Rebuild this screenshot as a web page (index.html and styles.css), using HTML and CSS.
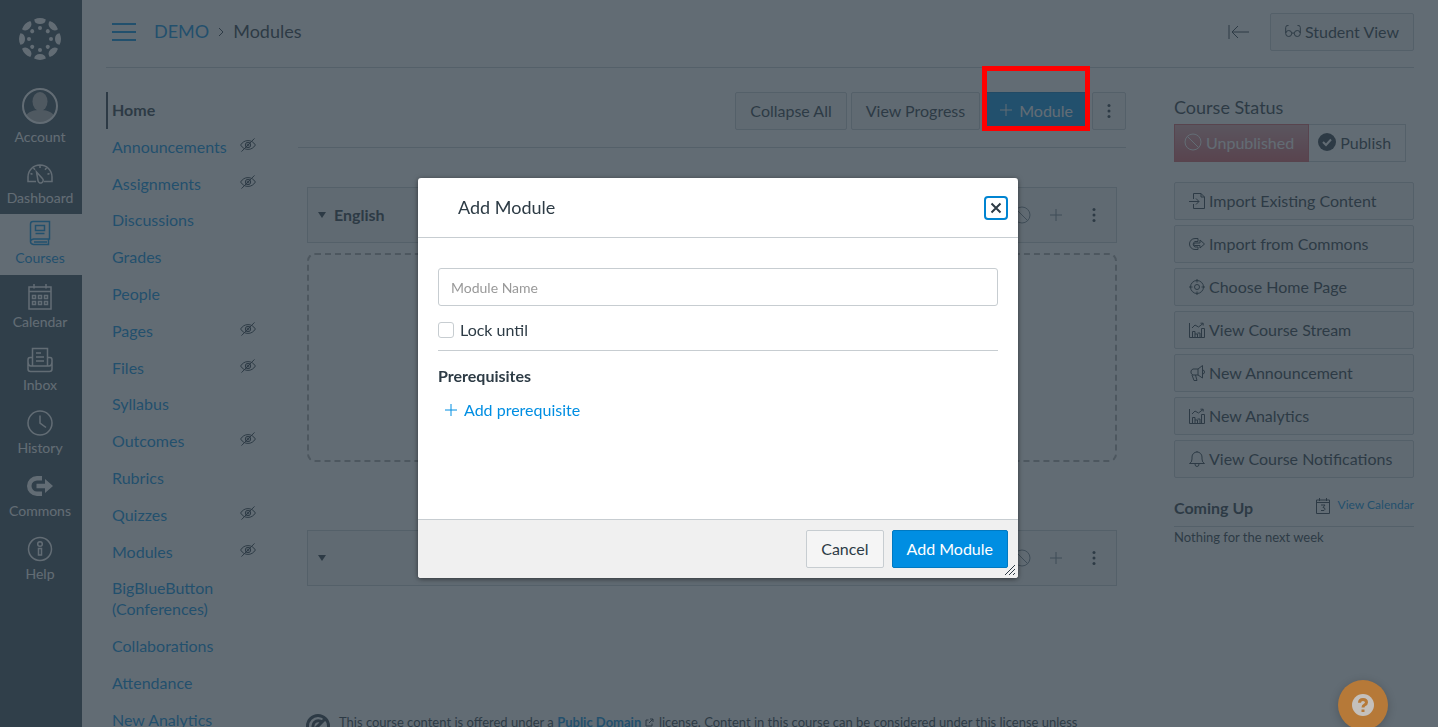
FILE: index.html
```html
<!DOCTYPE html>
<html lang="en">
<head>
    <meta charset="UTF-8">
    <meta name="viewport" content="width=device-width, initial-scale=1.0">
    <title>DEMO: Modules</title>
    <link rel="stylesheet" href="styles.css">
</head>
<body>
    <!-- Shared icons -->
    <svg class="sprite" aria-hidden="true">
        <symbol id="icon-hidden" viewBox="0 0 16 14">
            <path d="M0.6 7C2.5 4 5 2.6 8 2.6S13.5 4 15.4 7C13.5 10 11 11.4 8 11.4S2.5 10 0.6 7Z M1.5 13.6L14.5 0.4"/>
            <circle cx="8" cy="7" r="2.7"/><circle cx="8" cy="7" r="1"/>
        </symbol>
        <symbol id="icon-chart" viewBox="0 0 16 16">
            <path d="M0.5 1V15.5H15.5 M3.5 15.5V9.5H6V15.5 M6 12H8.5V15.5 M8.5 11H11V15.5 M12.5 15.5V6.5H15.5V15.5 M3 6L6 3L9.5 5L14 1.5 M11.5 1.2H14.2V3.5"/>
        </symbol>
        <symbol id="icon-plus" viewBox="0 0 14 14">
            <path d="M7 1V13 M1 7H13"/>
        </symbol>
        <symbol id="icon-ban" viewBox="0 0 18 18">
            <circle cx="9" cy="9" r="8"/><path d="M3.3 3.3L14.7 14.7"/>
        </symbol>
        <symbol id="icon-more" viewBox="0 0 4 16">
            <circle cx="2" cy="2.5" r="1.5"/><circle cx="2" cy="8" r="1.5"/><circle cx="2" cy="13.5" r="1.5"/>
        </symbol>
    </svg>

    <div class="app">
        <nav class="global-nav" aria-label="Global">
            <a href="#" class="logo" aria-label="Canvas">
                <svg width="44" height="44" viewBox="0 0 44 44">
                    <defs>
                        <g id="logo-part">
                            <path d="M16.2 2.4Q22 -0.4 27.8 2.4Q27.2 7 22 7T16.2 2.4Z"/>
                            <circle cx="22" cy="11" r="2"/>
                        </g>
                    </defs>
                    <use href="#logo-part"/>
                    <use href="#logo-part" transform="rotate(45 22 22)"/>
                    <use href="#logo-part" transform="rotate(90 22 22)"/>
                    <use href="#logo-part" transform="rotate(135 22 22)"/>
                    <use href="#logo-part" transform="rotate(180 22 22)"/>
                    <use href="#logo-part" transform="rotate(225 22 22)"/>
                    <use href="#logo-part" transform="rotate(270 22 22)"/>
                    <use href="#logo-part" transform="rotate(315 22 22)"/>
                </svg>
            </a>
            <a href="#" class="nav-item account">
                <svg width="36" height="36" viewBox="0 0 36 36">
                    <g class="avatar"><ellipse cx="18" cy="13.5" rx="7.5" ry="9.5"/><path d="M4 28C6 23 13 22 18 22S30 23 32 28Q27 35 18 35T4 28Z"/></g>
                    <circle cx="18" cy="18" r="17" class="thick"/>
                </svg>
                Account
            </a>
            <a href="#" class="nav-item">
                <svg width="26" height="26" viewBox="0 0 26 26">
                    <path d="M9 21.5H1V17A12 12 0 0 1 25 17V21.5H17 M13 5V8 M6.5 8L8 9.7 M19.5 8L18 9.7 M3.5 13.5L5.5 14.2 M22.5 13.5L20.5 14.2"/>
                    <path d="M9.5 12L15.4 18.5A2.6 2.6 0 1 1 11 20.5Z"/>
                </svg>
                Dashboard
            </a>
            <a href="#" class="nav-item active">
                <svg width="26" height="26" viewBox="0 0 26 26">
                    <path d="M3.500 22V4Q3.500 1.500 6 1.500H22.500V19H6.500Q3.500 19.500 3.500 21.700T6.500 24.500H21.500V19 M8.500 5.500H17.500V10.500H8.500Z M8.500 13.500H17.500 M7 22H20"/>
                </svg>
                Courses
            </a>
            <a href="#" class="nav-item">
                <svg width="26" height="26" viewBox="0 0 26 26">
                    <path d="M2 3H24V25H2Z M2 7.500H24 M7 0V4.500 M19 0V4.500 M5.500 11.500H8.500V14.500H5.500Z M11.500 11.500H14.500V14.500H11.500Z M17.500 11.500H20.500V14.500H17.500Z M5.500 17.500H8.500V20.500H5.500Z M11.500 17.500H14.500V20.500H11.500Z M17.500 17.500H20.500V20.500H17.500Z"/>
                </svg>
                Calendar
            </a>
            <a href="#" class="nav-item">
                <svg width="26" height="26" viewBox="0 0 26 26">
                    <path d="M5.500 18.500V1.500H20.500V18.500 M9 6H14 M9 10H17 M9 14H17 M5.500 10.500H3Q1 10.500 1 13V22Q1 24.500 3.500 24.500H22.500Q25 24.500 25 22V13Q25 10.500 23 10.500H20.500 M1 14Q1 19 4 19H22Q25 19 25 14"/>
                </svg>
                Inbox
            </a>
            <a href="#" class="nav-item">
                <svg width="26" height="26" viewBox="0 0 26 26">
                    <circle cx="13" cy="13" r="12"/><path d="M13 5.500V13L19 17.500"/>
                </svg>
                History
            </a>
            <a href="#" class="nav-item">
                <svg width="26" height="26" viewBox="0 0 26 26">
                    <path class="solid" d="M15 3H10A10 10 0 0 0 10 23H15V18.500H10A5.500 5.500 0 0 1 10 7.500H15Z M9.500 10.800H18V6L26 13L18 20V15.200H9.500Z"/>
                </svg>
                Commons
            </a>
            <a href="#" class="nav-item">
                <svg width="26" height="26" viewBox="0 0 26 26">
                    <circle cx="13" cy="13" r="11.500"/><circle cx="13" cy="8" r="2.300"/><path d="M11.500 12.500H14.500V19H11.500Z"/>
                </svg>
                Help
            </a>
        </nav>

        <div class="page">
            <header class="page-header">
                <button class="menu-toggle" aria-label="Course menu"><span></span><span></span><span></span></button>
                <div class="breadcrumbs">
                    <a href="#">DEMO</a>
                    <svg width="6" height="10" viewBox="0 0 6 10"><path d="M1 1L5 5L1 9"/></svg>
                    <span>Modules</span>
                </div>
                <button class="collapse-toggle" aria-label="Collapse">
                    <svg width="22" height="16" viewBox="0 0 22 16"><path d="M1 1V15 M21 8H4 M10 2L4 8L10 14"/></svg>
                </button>
                <button class="btn">
                    <svg width="16" height="16" viewBox="0 0 16 16"><circle cx="3.700" cy="10.500" r="3"/><circle cx="12.300" cy="10.500" r="3"/><path d="M0.700 10V4.500Q0.700 2 3.500 2.500 M15.300 10V4.500Q15.300 2 12.500 2.500 M6.700 10.500Q8 9 9.300 10.500"/></svg>
                    Student View
                </button>
            </header>

            <div class="columns">
                <nav class="course-nav" aria-label="Course">
                    <ul>
                        <li><a href="#" class="current">Home</a></li>
                        <li><a href="#">Announcements <svg width="16" height="14"><use href="#icon-hidden"/></svg></a></li>
                        <li><a href="#">Assignments <svg width="16" height="14"><use href="#icon-hidden"/></svg></a></li>
                        <li><a href="#">Discussions</a></li>
                        <li><a href="#">Grades</a></li>
                        <li><a href="#">People</a></li>
                        <li><a href="#">Pages <svg width="16" height="14"><use href="#icon-hidden"/></svg></a></li>
                        <li><a href="#">Files <svg width="16" height="14"><use href="#icon-hidden"/></svg></a></li>
                        <li><a href="#">Syllabus</a></li>
                        <li><a href="#">Outcomes <svg width="16" height="14"><use href="#icon-hidden"/></svg></a></li>
                        <li><a href="#">Rubrics</a></li>
                        <li><a href="#">Quizzes <svg width="16" height="14"><use href="#icon-hidden"/></svg></a></li>
                        <li><a href="#">Modules <svg width="16" height="14"><use href="#icon-hidden"/></svg></a></li>
                        <li><a href="#">BigBlueButton<br>(Conferences)</a></li>
                        <li><a href="#">Collaborations</a></li>
                        <li><a href="#">Attendance</a></li>
                        <li><a href="#">New Analytics</a></li>
                    </ul>
                </nav>

                <main class="content">
                    <div class="toolbar">
                        <button class="btn">Collapse All</button>
                        <button class="btn">View Progress</button>
                        <div class="highlighted">
                            <button class="btn btn-primary"><svg width="14" height="14"><use href="#icon-plus"/></svg> Module</button>
                        </div>
                        <button class="btn btn-more" aria-label="More options"><svg class="dots" width="4" height="16"><use href="#icon-more"/></svg></button>
                    </div>

                    <section class="module">
                        <div class="module-header">
                            <span class="caret"></span>
                            <h2>English</h2>
                            <button aria-label="Publish English"><svg width="18" height="18"><use href="#icon-ban"/></svg></button>
                            <button aria-label="Add item to English"><svg width="14" height="14"><use href="#icon-plus"/></svg></button>
                            <button aria-label="Manage English"><svg class="dots" width="4" height="16"><use href="#icon-more"/></svg></button>
                        </div>
                        <div class="drop-area"></div>
                    </section>

                    <section class="module">
                        <div class="module-header">
                            <span class="caret"></span>
                            <h2></h2>
                            <button aria-label="Publish module"><svg width="18" height="18"><use href="#icon-ban"/></svg></button>
                            <button aria-label="Add item"><svg width="14" height="14"><use href="#icon-plus"/></svg></button>
                            <button aria-label="Manage module"><svg class="dots" width="4" height="16"><use href="#icon-more"/></svg></button>
                        </div>
                    </section>

                    <footer class="license">
                        <svg width="24" height="24" viewBox="0 0 24 24"><circle cx="12" cy="12" r="10.500"/><path d="M16 8.500A5.200 5.200 0 1 0 16 15.500 M4 20L19 5"/></svg>
                        <p>This course content is offered under a <a href="#">Public Domain</a>
                            <svg width="9" height="9" viewBox="0 0 9 9"><path d="M3.500 2H1V8H7V5.500 M4 5L8 1 M5 1H8V4"/></svg>
                            license. Content in this course can be considered under this license unless</p>
                    </footer>
                </main>

                <aside class="sidebar">
                    <h2>Course Status</h2>
                    <div class="status">
                        <button class="btn unpublished"><svg width="18" height="18"><use href="#icon-ban"/></svg> Unpublished</button>
                        <button class="btn publish"><svg width="18" height="18" viewBox="0 0 18 18"><circle class="solid" cx="9" cy="9" r="9"/><path class="check" d="M5 9L8 12L13 6.500"/></svg> Publish</button>
                    </div>
                    <div class="actions">
                        <a href="#" class="btn"><svg width="16" height="16" viewBox="0 0 16 16"><path d="M4.500 6V0.500H12L15.500 4V15.500H4.500V11 M12 0.500V4H15.500 M0 8.500H10 M7 5.500L10 8.500L7 11.500"/></svg>Import Existing Content</a>
                        <a href="#" class="btn"><svg width="16" height="16" viewBox="0 0 16 16"><path d="M9 2.500H6A5.500 5.500 0 0 0 6 13.500H9V11H6A3 3 0 0 1 6 5.500H9Z M6 7H11V4L15.500 8L11 12V9.500H6A1 1 0 0 1 6 7Z"/></svg>Import from Commons</a>
                        <a href="#" class="btn"><svg width="16" height="16" viewBox="0 0 16 16"><circle cx="8" cy="8" r="6.500"/><circle cx="8" cy="8" r="2.500"/><path d="M8 0V3.500 M8 12.500V16 M0 8H3.500 M12.500 8H16"/></svg>Choose Home Page</a>
                        <a href="#" class="btn"><svg width="16" height="16"><use href="#icon-chart"/></svg>View Course Stream</a>
                        <a href="#" class="btn"><svg width="16" height="16" viewBox="0 0 16 16"><path d="M13.500 0.500V13L9 10H4A3.200 3.200 0 0 1 4 4H9L13.500 0.500 M9 4V10 M3 10L5 15.500H8L6.500 10 M13.500 5Q15.500 5 15.500 7T13.500 9"/></svg>New Announcement</a>
                        <a href="#" class="btn"><svg width="16" height="16"><use href="#icon-chart"/></svg>New Analytics</a>
                        <a href="#" class="btn"><svg width="16" height="16" viewBox="0 0 16 16"><path d="M0.500 12.500Q3 11.500 3 8V6A5 5 0 0 1 13 6V8Q13 11.500 15.500 12.500Z M8 1V0 M6 13Q6 15.500 8 15.500T10 13"/></svg>View Course Notifications</a>
                    </div>
                    <div class="coming-up">
                        <h3>Coming Up</h3>
                        <a href="#">
                            <svg width="14" height="16" viewBox="0 0 14 16"><path d="M0.500 2H13.500V15.500H0.500Z M0.500 4.500H13.500 M3.500 0V3 M10.500 0V3 M5 7H9L7 9.500Q9 9.500 9 11.300T5 12.500"/></svg>
                            View Calendar
                        </a>
                    </div>
                    <p class="empty">Nothing for the next week</p>
                </aside>
            </div>
        </div>
    </div>

    <div class="overlay">
        <form class="dialog" role="dialog" aria-labelledby="dialog-title">
            <div class="dialog-header">
                <h2 id="dialog-title">Add Module</h2>
                <button type="button" class="close" aria-label="Close">
                    <svg width="12" height="12" viewBox="0 0 12 12"><path d="M1.500 1.500L10.500 10.500 M10.500 1.500L1.500 10.500"/></svg>
                </button>
            </div>
            <div class="dialog-body">
                <input type="text" class="module-name" placeholder="Module Name" aria-label="Module Name">
                <div class="lock-row">
                    <input type="checkbox" id="lock-until">
                    <label for="lock-until">Lock until</label>
                </div>
                <h3>Prerequisites</h3>
                <a href="#" class="add-prerequisite"><svg width="14" height="14"><use href="#icon-plus"/></svg>Add prerequisite</a>
            </div>
            <div class="dialog-footer">
                <button type="button" class="btn">Cancel</button>
                <button type="submit" class="btn btn-primary">Add Module</button>
                <svg class="resize" width="12" height="12" viewBox="0 0 12 12"><path d="M1 11L11 1 M5 11L11 5 M9 11L11 9"/></svg>
            </div>
        </form>
    </div>

    <button class="help-bubble" aria-label="Help">
        <svg width="22" height="22" viewBox="0 0 22 22"><circle cx="11" cy="11" r="11"/><path d="M7.500 8.800Q7.500 5.500 11 5.500T14.500 8.500Q14.500 10 12.500 11Q11 11.800 11 13.500 M11 15.500V18"/></svg>
    </button>
</body>
</html>
```
FILE: styles.css
```css
* {
    box-sizing: border-box;
}

body {
    font-family: Lato, "Liberation Sans", sans-serif;
    font-size: 16px;
    line-height: 1.3;
    margin: 0;
    color: #2d3b45;
    background-color: #ffffff;
}

h2, h3, p, ul {
    margin: 0;
    padding: 0;
}

a {
    color: #008ee2;
    text-decoration: none;
}

button, input {
    font-family: inherit;
    font-size: 16px;
    color: inherit;
    margin: 0;
}

button {
    border: 0;
    padding: 0;
    background: none;
}

svg {
    fill: none;
    stroke: currentColor;
    flex-shrink: 0;
}

.sprite {
    display: none;
}

.solid {
    fill: currentColor;
    stroke: none;
}

.dots {
    fill: currentColor;
    stroke: none;
}

.app {
    display: flex;
    height: 100vh;
    overflow: hidden;
}

/* Global navigation */
.global-nav {
    width: 82px;
    padding-top: 17px;
    padding-right: 2px;
    flex-shrink: 0;
    background-color: #394b58;
    display: flex;
    flex-direction: column;
    gap: 1px;
}

.logo {
    display: flex;
    justify-content: center;
    margin-bottom: 19px;
    color: #ffffff;
}

.logo svg {
    fill: currentColor;
    stroke: none;
}

.nav-item {
    display: flex;
    flex-direction: column;
    align-items: center;
    gap: 3px;
    padding: 7px 0 8px;
    font-size: 14px;
    line-height: 18px;
    color: #ffffff;
}

.nav-item svg {
    stroke-width: 1.5;
}

.nav-item .thick {
    stroke-width: 2;
}

.nav-item.account {
    gap: 4px;
    padding-bottom: 6px;
}

.avatar {
    fill: #b5b5b5;
    stroke: none;
}

.nav-item.active {
    margin: -2px -2px 1px 0;
    padding: 6px 2px 8px 0;
    background-color: #ffffff;
    color: #008ee2;
}

/* Header */
.page {
    flex: 1;
    padding: 0 24px;
}

.page-header {
    display: flex;
    align-items: center;
    height: 68px;
    padding: 0 0 3px 6px;
    border-bottom: 1px solid #c7cdd1;
}

.menu-toggle {
    display: flex;
    flex-direction: column;
    gap: 6px;
    width: 24px;
}

.menu-toggle span {
    height: 2px;
    background-color: #008ee2;
}

.breadcrumbs {
    display: flex;
    align-items: center;
    gap: 9px;
    margin-left: 18px;
    flex: 1;
    font-size: 18px;
}

.collapse-toggle {
    display: flex;
    margin-right: 20px;
}

.btn {
    display: flex;
    align-items: center;
    justify-content: center;
    gap: 4px;
    height: 38px;
    padding: 0 14px 2px;
    border: 1px solid #c7cdd1;
    border-radius: 2px;
    background-color: #f5f5f5;
    color: #2d3b45;
    white-space: nowrap;
}

.btn-primary {
    gap: 6px;
    border-color: #0079c1;
    background-color: #008ee2;
    color: #ffffff;
}

.columns {
    display: flex;
    padding-top: 24px;
}

/* Course navigation */
.course-nav {
    width: 192px;
    flex-shrink: 0;
}

.course-nav ul {
    list-style: none;
}

.course-nav a {
    display: flex;
    justify-content: space-between;
    padding: 8px 42px 8px 6px;
}

.course-nav a.current {
    padding-left: 4px;
    border-left: 2px solid #2d3b45;
    color: #2d3b45;
    font-weight: bold;
}

.course-nav svg {
    margin-top: 1px;
    color: #2d3b45;
}

/* Modules */
.content {
    flex: 1;
    min-width: 0;
}

.toolbar {
    display: flex;
    justify-content: flex-end;
    gap: 4px;
    padding-bottom: 17px;
    border-bottom: 1px solid #c7cdd1;
}

.highlighted {
    position: relative;
}

.highlighted::after {
    content: "";
    position: absolute;
    inset: -26px -2px -1px;
    border: 5px solid #ff0000;
    z-index: 20;
}

.btn-more {
    width: 34px;
    padding: 0;
}

.module {
    margin: 39px 9px 68px;
}

.module-header {
    display: flex;
    align-items: center;
    height: 56px;
    padding: 0 20px 0 10px;
    border: 1px solid #c7cdd1;
    background-color: #f5f5f5;
}

.module-header h2 {
    flex: 1;
    padding-left: 8px;
    font-size: 16px;
}

.module-header button {
    display: flex;
    color: #73818c;
    margin-left: 18px;
}

.module-header button:last-child {
    margin-left: 29px;
    color: #2d3b45;
}

.caret {
    border: 4px solid transparent;
    border-top: 6px solid #2d3b45;
    border-bottom: 0;
}

.drop-area {
    height: 209px;
    margin-top: 10px;
    border: 2px dashed #aaaaaa;
    border-radius: 8px;
}

.license {
    display: flex;
    gap: 9px;
    padding-left: 8px;
    margin-top: 126px;
    font-size: 13px;
    line-height: 20px;
    white-space: nowrap;
}

.license > svg {
    margin-top: 2px;
    stroke-width: 3;
}

.license a {
    font-weight: bold;
}

.license p svg {
    margin-right: 2px;
}

/* Right sidebar */
.sidebar {
    width: 240px;
    margin-left: 48px;
    padding-top: 3px;
    flex-shrink: 0;
}

.sidebar h2 {
    font-size: 18px;
    font-weight: normal;
    line-height: 24px;
}

.status {
    display: flex;
    margin: 5px 0 20px;
}

.unpublished {
    padding: 0 14px 2px 9px;
    border-color: #d5606a;
    border-radius: 0;
    background: linear-gradient(#e0a5aa, #d9606a);
    color: #ffffff;
}

.publish {
    padding: 0 14px 2px 9px;
    border-left: 0;
    border-radius: 0;
    background-color: #ffffff;
}

.check {
    stroke: #ffffff;
    stroke-width: 2;
}

.actions {
    display: flex;
    flex-direction: column;
    gap: 5px;
}

.actions .btn {
    justify-content: flex-start;
    padding-bottom: 0;
}

.coming-up {
    display: flex;
    align-items: flex-start;
    justify-content: space-between;
    height: 31px;
    margin-top: 18px;
    border-bottom: 1px solid #c7cdd1;
}

.coming-up h3 {
    padding-top: 2px;
    font-size: 16px;
}

.coming-up a {
    display: flex;
    align-items: center;
    gap: 8px;
    font-size: 12px;
}

.coming-up svg {
    margin-top: 2px;
    color: #2d3b45;
}

.empty {
    font-size: 13px;
    line-height: 20px;
}

/* Dialog */
.overlay {
    position: fixed;
    inset: 0;
    z-index: 10;
    display: flex;
    align-items: flex-start;
    justify-content: center;
    padding: 178px 2px 0 0;
    background-color: rgba(45, 59, 69, 0.75);
}

.dialog {
    width: 600px;
    border-radius: 3px;
    background-color: #ffffff;
    box-shadow: 0 1px 5px rgba(0, 0, 0, 0.5);
}

.dialog-header {
    display: flex;
    align-items: center;
    justify-content: space-between;
    height: 60px;
    padding: 0 10px 0 40px;
    border-bottom: 1px solid #c7cdd1;
}

.dialog-header h2 {
    font-size: 18px;
    font-weight: normal;
}

.close {
    display: flex;
    align-items: center;
    justify-content: center;
    width: 24px;
    height: 24px;
    border: 2px solid #0084d1;
    border-radius: 4px;
}

.close svg {
    stroke-width: 2;
}

.dialog-body {
    min-height: 281px;
    padding: 30px 20px;
}

.module-name {
    width: 100%;
    height: 38px;
    padding: 0 12px;
    border: 1px solid #c7cdd1;
    border-radius: 3px;
    font-size: 14px;
}

.module-name::placeholder {
    color: #999999;
}

.lock-row {
    display: flex;
    align-items: center;
    gap: 6px;
    height: 45px;
    padding-top: 4px;
    border-bottom: 1px solid #c7cdd1;
}

.lock-row input {
    appearance: none;
    width: 16px;
    height: 16px;
    border: 1px solid #c7cdd1;
    border-radius: 3px;
}

.dialog-body h3 {
    margin-top: 15px;
    font-size: 16px;
}

.add-prerequisite {
    display: flex;
    align-items: center;
    gap: 6px;
    padding: 13px 6px;
}

.dialog-footer {
    display: flex;
    justify-content: flex-end;
    gap: 8px;
    padding: 10px;
    border-top: 1px solid #c7cdd1;
    border-radius: 0 0 3px 3px;
    background-color: #f0f0f0;
    position: relative;
}

.resize {
    position: absolute;
    right: 2px;
    bottom: 2px;
}

/* Floating help button */
.help-bubble {
    position: fixed;
    right: 50px;
    bottom: -3px;
    z-index: 20;
    display: flex;
    align-items: center;
    justify-content: center;
    width: 50px;
    height: 50px;
    border-radius: 50%;
    background-color: #b67938;
    color: #c4c0bc;
    box-shadow: 0 2px 10px rgba(0, 0, 0, 0.2);
}

.help-bubble svg circle {
    fill: currentColor;
    stroke: none;
}

.help-bubble svg path {
    stroke: #b67938;
    stroke-width: 3;
}
```
